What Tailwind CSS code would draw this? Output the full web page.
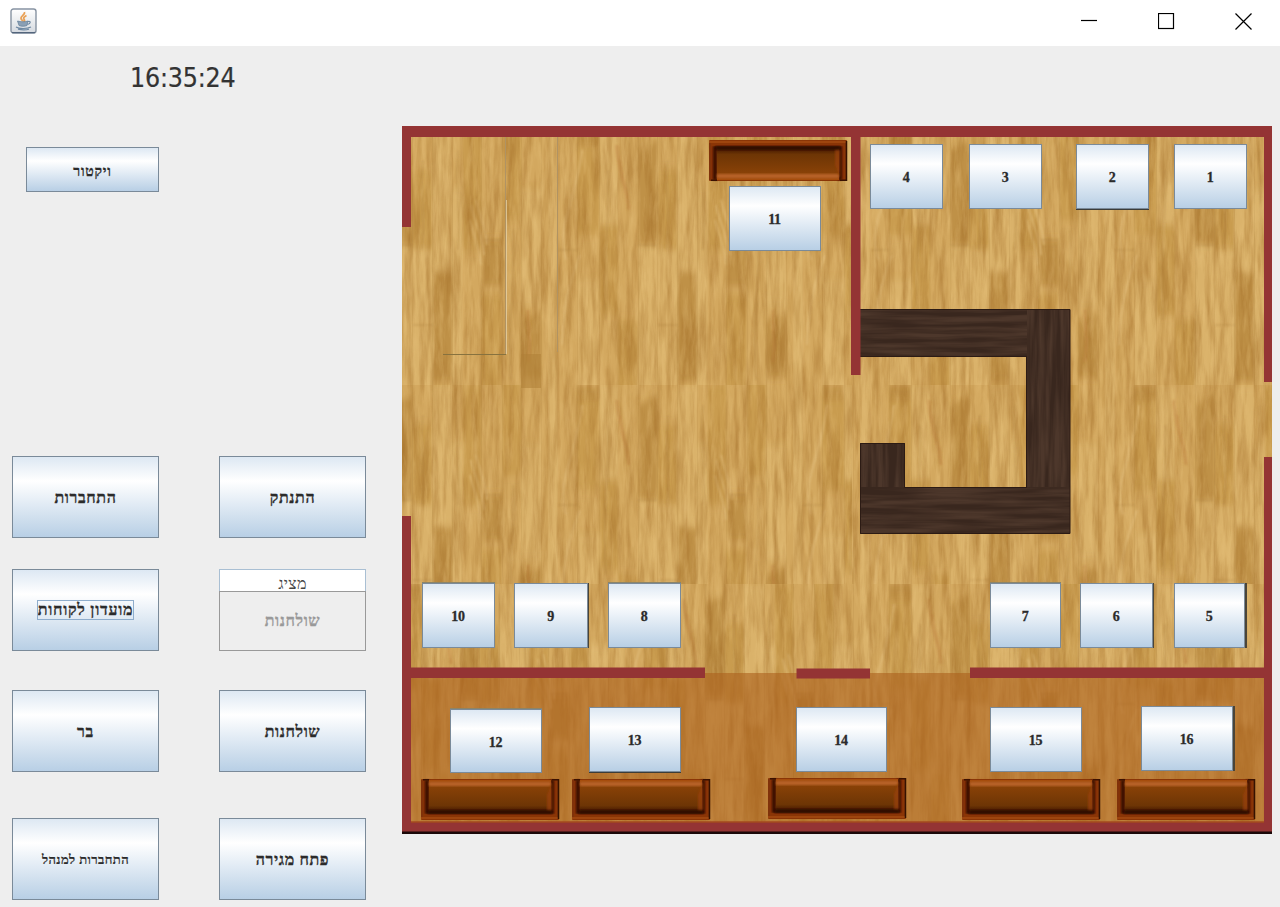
<!DOCTYPE html>
<html lang="he">
<head>
<meta charset="utf-8">
<title>Restaurant</title>
<script src="https://cdn.jsdelivr.net/npm/@tailwindcss/browser@4"></script>
</head>
<body class="w-[1280px] h-[907px] overflow-hidden bg-[#eeeeee] font-['Liberation_Serif',serif] text-[#2b2b2b]">
<header class="flex h-[46px] items-center justify-between bg-white pl-[10px] pr-[28px] pb-[4px]">
  <svg class="w-[27px] h-[26px]" viewBox="0 0 27 26">
    <defs><linearGradient id="ic" x1="0" y1="0" x2="0" y2="1"><stop offset="0" stop-color="#fff"/><stop offset="1" stop-color="#d5dae0"/></linearGradient></defs>
    <rect x="1" y="1" width="25" height="24" rx="2.5" fill="url(#ic)" stroke="#8793a2" stroke-width="1.4"/>
    <path d="M2 24.6h23" stroke="#53657c" stroke-width="1.2"/>
    <path d="M14.5 4c1 2.500-4 4-3.500 6.500 .2 1.500 2 2.200 2 3M16.500 7.500c-3 1.500-3.500 2.700-2.200 4.200 .6 .8 .2 1.600-.7 2.100" fill="none" stroke="#e9a055" stroke-width="1.8"/>
    <path d="M7.500 13c3 1 8 1 10.500 0l-1 4.500c-2 1-6 1-8 0z" fill="#8ba0b5" stroke="#5f7b96" stroke-width=".7"/>
    <path d="M18 13.500c3-.8 3 2-.5 3M6 19c3 2 11 2 15 0M8 21.200c4 .9 8 .9 11 0" fill="none" stroke="#6f89a3" stroke-width="1.200"/>
  </svg>
  <div class="flex items-center gap-[60px] text-black">
    <svg class="w-[17px] h-[17px]" viewBox="0 0 17 17"><path d="M0 7.500h16" stroke="currentColor" stroke-width="1.200"/></svg>
    <svg class="w-[17px] h-[17px]" viewBox="0 0 17 17"><rect x=".5" y=".5" width="15" height="15" fill="none" stroke="currentColor" stroke-width="1.200"/></svg>
    <svg class="w-[17px] h-[17px]" viewBox="0 0 17 17"><path d="M.5.500l16 16M16.500.500l-16 16" stroke="currentColor" stroke-width="1.200"/></svg>
  </div>
</header>
<main class="flex h-[861px]">
  <aside class="flex w-[402px] shrink-0 flex-col pl-[12px]">
    <div class="mt-[15px] pl-[118px] h-[34px] leading-[34px] whitespace-nowrap font-['DejaVu_Sans_Condensed','DejaVu_Sans',sans-serif] [font-stretch:condensed] text-[26.5px] tracking-[-0.2px] text-[#333] [-webkit-text-stroke:0.2px_#333]"><span id="clock">16:35:24</span></div>
    <button class="mt-[52px] ml-[14px] h-[45px] w-[133px] border border-[#7a8a99] bg-linear-to-b from-[#dde8f3] via-white via-30% to-[#b8cfe5] pt-[3px] text-[14px] font-bold tracking-[0.8px] [-webkit-text-stroke:0.3px]">ויקטור</button>
    <div class="mt-[264px] grid grid-cols-[147px_147px] gap-x-[60px] text-[16px] font-bold tracking-[0.6px] [-webkit-text-stroke:0.3px]">
      <button class="h-[82px] border border-[#7a8a99] bg-linear-to-b from-[#dde8f3] via-white via-30% to-[#b8cfe5] pt-[2px]">התחברות</button>
      <button class="h-[82px] border border-[#7a8a99] bg-linear-to-b from-[#dde8f3] via-white via-30% to-[#b8cfe5] pt-[2px]">התנתק</button>
      <button class="mt-[31px] h-[82px] border border-[#7a8a99] bg-linear-to-b from-[#dde8f3] via-white via-30% to-[#b8cfe5]"><span class="inline-block h-[18px] whitespace-nowrap leading-[18px] tracking-[0.75px] outline outline-[#8fadcc]">מועדון לקוחות</span></button>
      <div class="mt-[31px] flex h-[82px] flex-col">
        <div class="h-[22px] border border-b-0 border-[#a9bfd3] bg-white pt-[4px] text-center text-[16px] leading-[20px] font-normal tracking-[0.3px] text-[#444] [-webkit-text-stroke:0]">מציג</div>
        <button class="grow border border-[#999] bg-[#eeeeee] text-[#999]">שולחנות</button>
      </div>
      <button class="mt-[39px] h-[82px] border border-[#7a8a99] bg-linear-to-b from-[#dde8f3] via-white via-30% to-[#b8cfe5] pt-[2px]">בר</button>
      <button class="mt-[39px] h-[82px] border border-[#7a8a99] bg-linear-to-b from-[#dde8f3] via-white via-30% to-[#b8cfe5] pt-[2px]">שולחנות</button>
      <button class="mt-[46px] h-[82px] border border-[#7a8a99] bg-linear-to-b from-[#dde8f3] via-white via-30% to-[#b8cfe5] pt-[2px] text-[13px] tracking-[0.4px] [-webkit-text-stroke:0.2px]">התחברות למנהל</button>
      <button class="mt-[46px] h-[82px] border border-[#7a8a99] bg-linear-to-b from-[#dde8f3] via-white via-30% to-[#b8cfe5] pt-[2px]">פתח מגירה</button>
    </div>
  </aside>
  <section class="relative mt-[80px] h-[708px] w-[870px] shrink-0">
    <svg class="block h-[708px] w-[870px]" viewBox="402 126 870 708">
      <defs>
        <filter id="soft" x="-5%" y="-5%" width="110%" height="110%"><feGaussianBlur stdDeviation="1"/></filter>
        <filter id="plankSoft" x="-2%" y="-10%" width="104%" height="120%"><feGaussianBlur stdDeviation="0.8 3.5"/></filter>
        <filter id="grain" x="0" y="0" width="100%" height="100%" color-interpolation-filters="sRGB">
          <feTurbulence type="fractalNoise" baseFrequency="0.15 0.016" numOctaves="4" seed="8"/>
          <feColorMatrix values="0 0 0 0 .62  0 0 0 0 .41  0 0 0 0 .14  1.800 0 0 0 -.65"/>
        </filter>
        <filter id="shine" x="0" y="0" width="100%" height="100%" color-interpolation-filters="sRGB">
          <feTurbulence type="fractalNoise" baseFrequency="0.18 0.03" numOctaves="4" seed="21"/>
          <feColorMatrix values="0 0 0 0 .93  0 0 0 0 .79  0 0 0 0 .52  0 2 0 0 -.85"/>
        </filter>
        <filter id="fibre" x="0" y="0" width="100%" height="100%" color-interpolation-filters="sRGB">
          <feTurbulence type="fractalNoise" baseFrequency="0.012 0.18" numOctaves="3" seed="4"/>
          <feColorMatrix values="0 0 0 0 .38  0 0 0 0 .28  0 0 0 0 .22  2.500 0 0 0 -.8"/>
        </filter>
        <filter id="fibreV" x="0" y="0" width="100%" height="100%" color-interpolation-filters="sRGB">
          <feTurbulence type="fractalNoise" baseFrequency="0.18 0.012" numOctaves="3" seed="4"/>
          <feColorMatrix values="0 0 0 0 .38  0 0 0 0 .28  0 0 0 0 .22  2.500 0 0 0 -.8"/>
        </filter>
        <g id="planks">
          <rect width="246" height="256" fill="#d3a85f"/>
          <g filter="url(#plankSoft)">
            <path fill="#c99c50" d="M29 0h22v105h-22zM52 95h18v90h-18zM110 40h19v80h-19zM160 0h18v120h-18zM200 -8h18v98h-18zM70 190h20v74h-20zM178 165h20v99h-20z"/>
            <path fill="#dab26b" d="M0 -8h10v272h-10zM52 0h18v95h-18zM110 120h20v144h-20zM129 0h20v140h-20zM149 60h11v204h-11zM30 150h21v114h-21zM90 115h19v149h-19zM218 60h20v115h-20z"/>
            <path fill="#bf9147" d="M29 0h22v16h-22zM91 20l18-10v105h-18zM130 140l19 4v108h-19zM180 110h19v46h-19zM218 190l20-8v66h-20z"/>
          </g>
          <g filter="url(#soft)">
            <path fill="none" stroke="#bd803e" stroke-width="3" opacity=".5" d="M69 15c0 25 10 36 12 65M72 30c1 20 6 30 8 38M225 180c-1 16 4 30 0 52"/>
            <path fill="none" stroke="#e6c384" stroke-width="1.500" opacity=".7" d="M18 130c-10-38 10-55 16-110M14 215c2-45 7-60 18-90M168 75c4 20 12 30 13 50M167 90c4 17 10 28 11 45M173 70c4 17 10 28 11 45"/>
            <path fill="none" stroke="#b08744" stroke-width="1.200" opacity=".6" d="M10 120h20M90 115h19M110 195h20M180 110h18M60 40c3 40-6 75-2 150M155 20c-3 30 3 60 0 100M210 100c3 50-6 75-2 150M120 30c-4 25 3 55-1 90"/>
          </g>
          <path fill="none" stroke="#a97d3a" stroke-width=".8" opacity=".22" d="M10 0v256M29.500 0v256M51.500 0v256M70 0v256M90.500 0v256M109.500 0v256M129.500 0v256M149.500 0v256M178.500 0v256M199.500 0v256M218.500 0v256M238.500 0v256"/>
        </g>
        <pattern id="wood" patternUnits="userSpaceOnUse" x="860" y="130" width="245" height="255"><use href="#planks"/></pattern>
        <pattern id="woodL" patternUnits="userSpaceOnUse" x="548" y="130" width="245" height="255"><use href="#planks"/></pattern>
        <pattern id="woodB" patternUnits="userSpaceOnUse" x="860" y="584" width="245" height="255"><use href="#planks"/></pattern>
        <linearGradient id="seat" x1="0" y1="0" x2="0" y2="1"><stop offset="0" stop-color="#a94e0d"/><stop offset=".18" stop-color="#8a4207"/><stop offset=".8" stop-color="#6d3505"/><stop offset="1" stop-color="#401500"/></linearGradient>
        <g id="sofa">
          <rect width="138" height="41" rx="1" fill="#8a3506"/>
          <path d="M1 1v38M137 1v38" fill="none" stroke="#80320a" stroke-width="2"/>
          <path d="M6 1v32h125V1" fill="none" stroke="#3a0e00" stroke-width="4" filter="url(#soft)"/>
          <rect x="8" y="1" width="122" height="32" fill="url(#seat)"/>
          <path d="M8 3h122v4H8z" fill="#b8642a" filter="url(#soft)"/>
          <path d="M8 31h122l2 4H6z" fill="#300b00" filter="url(#soft)"/>
          <path d="M131 4l-5 12v15h5z" fill="#9c430d" opacity=".7" filter="url(#soft)"/>
          <path d="M0 39h138" stroke="#a34910" stroke-width="2" opacity=".8"/>
          <path d="M137.500 0v40" stroke="#351200" stroke-width="1.500"/>
          <path d="M2 .800h6M131 .800h6" stroke="#3a1000" stroke-width="1.500"/>
        </g>
      </defs>
      <rect x="402" y="126" width="870" height="708" fill="url(#wood)"/>
      <rect x="402" y="126" width="450" height="460" fill="url(#woodL)"/>
      <rect x="402" y="584" width="870" height="245" fill="url(#woodB)"/>
      <rect x="402" y="126" width="870" height="708" filter="url(#grain)" opacity=".55"/>
      <rect x="402" y="126" width="870" height="708" filter="url(#shine)" opacity=".35"/>
      <path d="M505.500 136v218M557.500 136v216" stroke="#b09363" stroke-width="1" fill="none"/>
      <path d="M506.500 200v154" stroke="#ead8ae" stroke-width="1" opacity=".7"/>
      <path d="M443 354.500h63" stroke="#87723f"/>
      <rect x="521" y="354" width="20" height="34" fill="#af8037" opacity=".55"/>
      <rect x="402" y="673" width="870" height="150" fill="#ab611c" opacity=".6"/>
      <path d="M860 309h210v225H860v-91h45v44h121V357H860z" fill="#39271e"/>
      <rect x="860" y="309" width="167" height="48" filter="url(#fibre)" opacity=".5"/>
      <rect x="860" y="487" width="210" height="47" filter="url(#fibre)" opacity=".5"/>
      <rect x="1027" y="309" width="43" height="178" filter="url(#fibreV)" opacity=".5"/>
      <rect x="860" y="443" width="45" height="44" filter="url(#fibreV)" opacity=".5"/>
      <path d="M860 309.500h210v224H860.500v-90h44v44h122V356.500H860" fill="none" stroke="#2c1b14" stroke-width="1"/>
      <g fill="#943434">
        <rect x="402" y="126" width="870" height="11"/>
        <rect x="402" y="126" width="9" height="101"/>
        <rect x="402" y="516" width="9" height="316"/>
        <rect x="851" y="126" width="9.500" height="249"/>
        <rect x="1264" y="126" width="8" height="256"/>
        <rect x="1264" y="457" width="8" height="375"/>
        <rect x="402" y="822" width="870" height="10"/>
        <rect x="402" y="667.500" width="303" height="10.500"/>
        <rect x="796.500" y="668.500" width="73.500" height="10"/>
        <rect x="970" y="667.500" width="302" height="10.500"/>
      </g>
      <path d="M411 822h853" stroke="#a54a1e" stroke-width="1.500"/>
      <rect x="402" y="831.500" width="870" height="2.500" fill="#1b0808"/>
      <use href="#sofa" x="421" y="779"/>
      <use href="#sofa" x="572" y="779"/>
      <use href="#sofa" x="768" y="778"/>
      <use href="#sofa" x="962" y="779"/>
      <use href="#sofa" x="1117" y="779"/>
      <use href="#sofa" transform="translate(709 181) scale(1 -1)"/>
    </svg>
    <div id="tables" class="absolute inset-0"></div>
  </section>
</main>
<script>
  const base = "absolute flex items-center justify-center border border-[#7a8a99] bg-linear-to-b from-[#dde8f3] via-white via-30% to-[#b8cfe5] pt-[2px] pr-[1px] text-[14px] tracking-[-0.3px] font-bold [-webkit-text-stroke:0.3px]";
  const edge = { b: " shadow-[0_1px_0_#3c3c38]", r: " shadow-[1px_0_0_#4a4438]", R: " shadow-[2px_0_0_#4a4438]", t: " shadow-[0_-1px_0_#8c8468]", n: "" };
  const tables = [
    [1,772,18,73,65,"n"],[2,674,18,73,65,"b"],[3,567,18,73,65,"n"],[4,468,18,73,65,"n"],[11,327,60,92,65,"n"],
    [10,20,457,73,65,"t"],[9,112,457,74,65,"r"],[8,206,457,73,65,"t"],[7,588,457,71,65,"t"],[6,678,457,73,65,"r"],[5,772,457,71,65,"R"],
    [12,48,583,92,64,"t"],[13,187,581,92,65,"b"],[14,394,581,91,65,"n"],[15,588,581,92,65,"n"],[16,739,580,92,65,"R"]
  ];
  const host = document.getElementById("tables");
  for (const [n, x, y, w, h, e] of tables) {
    const b = document.createElement("button");
    b.className = base + edge[e];
    b.style.cssText = `left:${x}px;top:${y}px;width:${w}px;height:${h}px`;
    b.textContent = n;
    host.append(b);
  }
</script>
</body>
</html>
